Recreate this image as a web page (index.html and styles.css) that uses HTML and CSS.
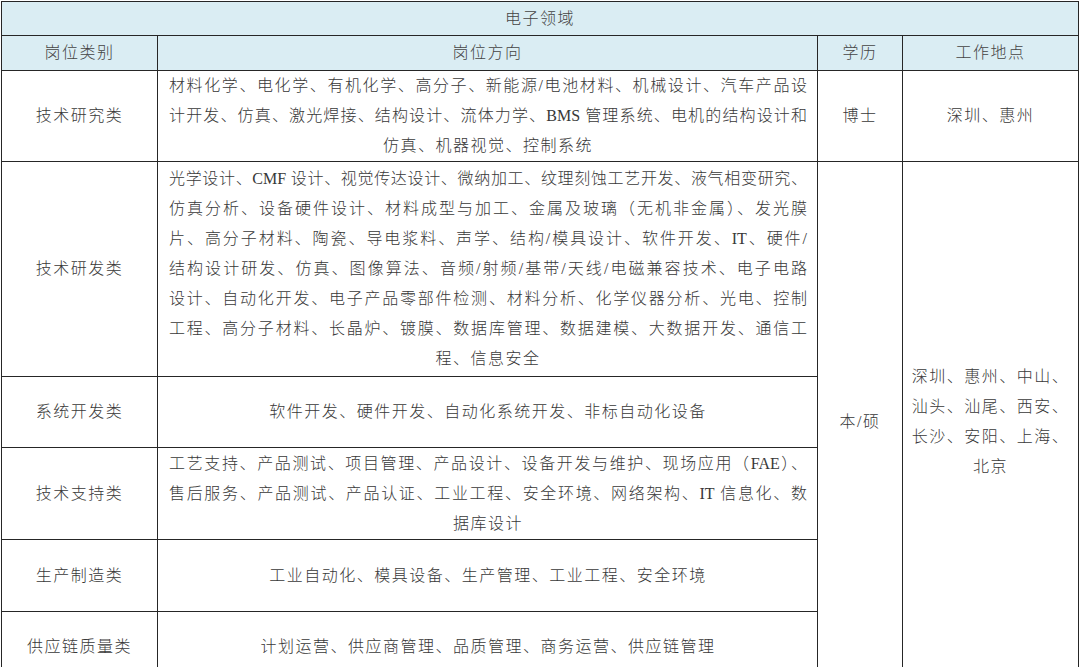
FILE: index.html
```html
<!DOCTYPE html>
<html lang="zh-CN">
<head>
<meta charset="utf-8">
<title>电子领域</title>
<link rel="stylesheet" href="styles.css">
</head>
<body>
<table class="jobs">
  <colgroup>
    <col class="c-type">
    <col class="c-dir">
    <col class="c-edu">
    <col class="c-loc">
  </colgroup>
  <tr class="r-title">
    <td colspan="4" class="shade">电子领域</td>
  </tr>
  <tr class="r-head">
    <td class="shade">岗位类别</td>
    <td class="shade">岗位方向</td>
    <td class="shade">学历</td>
    <td class="shade">工作地点</td>
  </tr>
  <tr class="r-1">
    <td>技术研究类</td>
    <td class="dir">
      <div class="ln">材料化学、电化学、有机化学、高分子、新能源/电池材料、机械设计、汽车产品设</div>
      <div class="ln">计开发、仿真、激光焊接、结构设计、流体力学、<span class="lat">BMS</span> 管理系统、电机的结构设计和</div>
      <div class="ln last">仿真、机器视觉、控制系统</div>
    </td>
    <td>博士</td>
    <td>深圳、惠州</td>
  </tr>
  <tr class="r-2">
    <td>技术研发类</td>
    <td class="dir">
      <div class="ln">光学设计、<span class="lat">CMF</span> 设计、视觉传达设计、微纳加工、纹理刻蚀工艺开发、液气相变研究、</div>
      <div class="ln">仿真分析、设备硬件设计、材料成型与加工、金属及玻璃（无机非金属）、发光膜</div>
      <div class="ln">片、高分子材料、陶瓷、导电浆料、声学、结构/模具设计、软件开发、<span class="lat">IT</span>、硬件/</div>
      <div class="ln">结构设计研发、仿真、图像算法、音频/射频/基带/天线/电磁兼容技术、电子电路</div>
      <div class="ln">设计、自动化开发、电子产品零部件检测、材料分析、化学仪器分析、光电、控制</div>
      <div class="ln">工程、高分子材料、长晶炉、镀膜、数据库管理、数据建模、大数据开发、通信工</div>
      <div class="ln last">程、信息安全</div>
    </td>
    <td rowspan="5">本/硕</td>
    <td rowspan="5" class="loc">
      <div>深圳、惠州、中山、</div>
      <div>汕头、汕尾、西安、</div>
      <div>长沙、安阳、上海、</div>
      <div>北京</div>
    </td>
  </tr>
  <tr class="r-3">
    <td>系统开发类</td>
    <td class="dir"><div class="ln last">软件开发、硬件开发、自动化系统开发、非标自动化设备</div></td>
  </tr>
  <tr class="r-4">
    <td>技术支持类</td>
    <td class="dir">
      <div class="ln">工艺支持、产品测试、项目管理、产品设计、设备开发与维护、现场应用（<span class="lat">FAE</span>）、</div>
      <div class="ln">售后服务、产品测试、产品认证、工业工程、安全环境、网络架构、<span class="lat">IT</span> 信息化、数</div>
      <div class="ln last">据库设计</div>
    </td>
  </tr>
  <tr class="r-5">
    <td>生产制造类</td>
    <td class="dir"><div class="ln last">工业自动化、模具设备、生产管理、工业工程、安全环境</div></td>
  </tr>
  <tr class="r-6">
    <td>供应链质量类</td>
    <td class="dir"><div class="ln last">计划运营、供应商管理、品质管理、商务运营、供应链管理</div></td>
  </tr>
</table>
</body>
</html>
```
FILE: styles.css
```css
html, body {
  margin: 0;
  padding: 0;
  background: #ffffff;
}

body {
  padding: 1px 0 0 1px;
  font-family: "Liberation Serif", "Noto Sans CJK SC", serif;
  font-size: 16px;
  font-weight: 300;
  color: #383838;
}

.jobs {
  border-collapse: collapse;
  table-layout: fixed;
  width: 1077px;
}

.c-type { width: 156px; }
.c-dir  { width: 660px; }
.c-edu  { width: 85px; }
.c-loc  { width: 176px; }

.jobs td {
  border: 1px solid #262626;
  padding: 0;
  text-align: center;
  vertical-align: middle;
  line-height: 30px;
  letter-spacing: 1.5px;
}

.jobs td.shade {
  background: #daedf3;
  color: #444444;
}

.r-title { height: 34px; }
.r-head  { height: 35px; }
.r-1     { height: 91px; }
.r-2     { height: 215px; }
.r-3     { height: 71px; }
.r-4     { height: 92px; }
.r-5     { height: 72px; }
.r-6     { height: 71px; }

.jobs td.dir {
  padding: 0 10px 0 11px;
}

.ln {
  height: 30px;
  letter-spacing: 0;
  text-align: justify;
  text-align-last: justify;
  text-justify: inter-character;
}

.ln.last {
  letter-spacing: 1.5px;
  text-align: center;
  text-align-last: center;
}

.lat {
  font-family: "Liberation Serif", serif;
  font-weight: 400;
  letter-spacing: 0;
  line-height: 1;
}

.loc div {
  line-height: 30px;
}
```
